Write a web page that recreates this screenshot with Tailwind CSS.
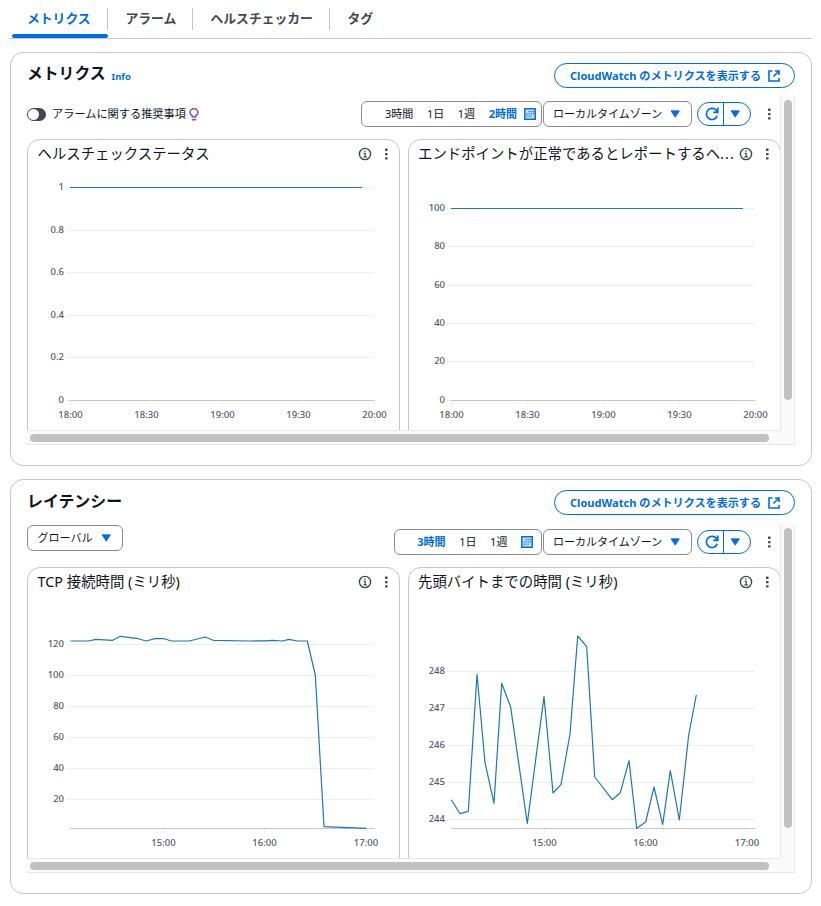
<!DOCTYPE html>
<html lang="ja">
<head>
    <meta charset="UTF-8">
    <meta name="viewport" content="width=device-width, initial-scale=1.0">
    <title>ヘルスチェック - メトリクス</title>
    <script src="https://cdn.jsdelivr.net/npm/@tailwindcss/browser@4"></script>
</head>
<body class="bg-white w-[821px] h-[906px] overflow-hidden font-['Noto_Sans','Noto_Sans_CJK_JP',sans-serif] text-[#0f141a] text-[11px] leading-none whitespace-nowrap">
    <!-- icons -->
    <svg class="hidden">
        <symbol id="external" viewBox="0 0 12 12"><path d="M4.5 1H1v10h10V8M7 1h4v4M11 1 5.5 6.5" fill="none" stroke="currentColor" stroke-width="1.6"/></symbol>
        <symbol id="info" viewBox="0 0 14 14"><circle cx="7" cy="7" r="5.6" fill="none" stroke="currentColor" stroke-width="1.4"/><path d="M5.6 6.4H7.2V9.9M5.4 9.9h3.4M6.2 4.2h1.4" fill="none" stroke="currentColor" stroke-width="1.2"/></symbol>
        <symbol id="dots" viewBox="0 0 4 12"><path d="M1.1 .6h2.4v2.4H1.1zM1.1 4.9h2.4v2.4H1.1zM1.1 9.2h2.4v2.4H1.1z" fill="currentColor"/></symbol>
        <symbol id="caret" viewBox="0 0 10 8"><path d="M1 .8h8.4L5.2 7.2z" fill="currentColor" stroke="currentColor" stroke-width=".8" stroke-linejoin="round"/></symbol>
        <symbol id="calendar" viewBox="0 0 12 12"><path d="M.8 .8h10.4v10.4H.8z" fill="#cfe3fb" stroke="currentColor" stroke-width="1.5"/><path d="M4.5 3h1.2v1.2H4.5zM6.6 3h1.2v1.2H6.6zM8.7 3h1.2v1.2H8.7zM2.4 5.2h1.2v1.2H2.4zM4.5 5.2h1.2v1.2H4.5zM6.6 5.2h1.2v1.2H6.6zM8.7 5.2h1.2v1.2H8.7zM2.4 7.6h1.2v1.2H2.4zM4.5 7.6h1.2v1.2H4.5zM6.6 7.6h1.2v1.2H6.6z" fill="currentColor"/></symbol>
        <symbol id="refresh" viewBox="0 0 14 14"><path d="M12.2 8.9A5.6 5.6 0 1 1 11.9 4.3L12.6 5.2M12.8 .6V5.4H8.2" fill="none" stroke="currentColor" stroke-width="1.7"/></symbol>
        <symbol id="bulb" viewBox="0 0 10 13"><path d="M3.4 9V7.8C1.8 6.9 1 5.9 1 4.6a4 4 0 0 1 8 0C9 5.9 8.2 6.9 6.6 7.8V9z" fill="none" stroke="currentColor" stroke-width="1.6"/><path d="M2.8 11.7h4.4" stroke="currentColor" stroke-width="1.6"/></symbol>
    </svg>

    <!-- tabs -->
    <nav class="ml-2.5 w-[802px] h-[39px] border-b border-[#c6c6cd] flex items-start text-[12.8px] font-bold text-[#424650]">
        <div class="ml-0.5 w-24 h-[38px] flex flex-col justify-end text-[#006ce0]">
            <div class="h-[22px] mb-1 pl-[15px] flex items-center border-r border-[#c6c6cd] leading-5 pb-[3px]">メトリクス</div>
            <div class="h-1 rounded-sm bg-[#006ce0]"></div>
        </div>
        <div class="mt-2 w-[85px] h-[22px] pl-[17.5px] pb-px flex items-center border-r border-[#c6c6cd]">アラーム</div>
        <div class="mt-2 w-[137px] h-[22px] pl-[17.5px] pb-px flex items-center border-r border-[#c6c6cd]">ヘルスチェッカー</div>
        <div class="mt-2 h-[22px] pl-[17.5px] pb-px flex items-center">タグ</div>
    </nav>

    <!-- metrics -->
    <section class="mt-[13px] ml-2.5 w-[802px] h-[414px] border border-[#c6c6cd] rounded-[13px] pl-4 pr-4 pt-2.5">
        <header class="h-[25px] flex justify-between">
            <div class="flex items-start gap-1.5 pt-[3px]">
                <h2 class="text-[15.8px] leading-none font-bold">メトリクス</h2>
                <a class="pt-[6px] text-[9.4px] leading-none font-bold text-[#006ce0]">Info</a>
            </div>
            <button class="w-[241px] h-[25px] pl-px border border-[#006ce0] rounded-full flex items-center justify-center gap-[7px] text-[#006ce0] text-[11.1px] font-bold"><span>CloudWatch のメトリクスを表示する</span><svg class="size-3"><use href="#external"/></svg></button>
        </header>
        <div class="mt-[9px] w-[768px] h-[348px] grid grid-cols-[753px_15px] grid-rows-[333px_15px]">
            <div class="overflow-hidden">
                <div class="mt-1 h-[26px] flex items-center justify-between">
                    <div class="flex items-center">
                        <div class="w-[19px] h-[13px] rounded-full bg-[#424650] p-px"><div class="size-[11px] rounded-full bg-white"></div></div>
                        <span class="ml-1.5 text-[11.2px]">アラームに関する推奨事項</span>
                        <svg class="ml-[3px] w-2.5 h-[13px] text-[#8f4fd9]"><use href="#bulb"/></svg>
                    </div>
                    <div class="flex items-center">
                        <div class="w-[181px] h-[26px] border border-[#8c8c94] rounded-md flex items-center justify-end gap-[13.6px] pr-[5px]">
                            <span class="pb-px">3時間</span><span class="pb-px">1日</span><span class="pb-px">1週</span>
                            <span class="flex items-center gap-[7px] text-[#006ce0] font-bold"><span class="pb-px">2時間</span><svg class="size-3"><use href="#calendar"/></svg></span>
                        </div>
                        <div class="ml-px w-[149px] h-[26px] border border-[#8c8c94] rounded-md flex items-center justify-between pl-[9px] pr-[11px]"><span class="pb-px">ローカルタイムゾーン</span><svg class="w-2.5 h-2 mb-px text-[#006ce0]"><use href="#caret"/></svg></div>
                        <div class="ml-[5px] w-[54px] h-6 border border-[#006ce0] rounded-full flex text-[#006ce0]">
                            <span class="w-[26px] pl-[3px] border-r border-[#006ce0] flex items-center justify-center"><svg class="size-3.5 mb-px"><use href="#refresh"/></svg></span>
                            <span class="flex-1 pr-1 flex items-center justify-center"><svg class="w-2.5 h-2 mb-px"><use href="#caret"/></svg></span>
                        </div>
                        <svg class="ml-4 mr-[9px] w-1 h-3 text-[#424650]"><use href="#dots"/></svg>
                    </div>
                </div>
                <div class="mt-3 flex gap-2 w-[760px]">
                    <article class="w-[373px] h-[310px] shrink-0 border border-[#c6c6cd] rounded-[13px]">
                        <div class="h-[30px] pl-[9.5px] pr-[11px] pb-0.5 flex items-center">
                            <h3 class="flex-1 text-[14.4px]">ヘルスチェックステータス</h3>
                            <svg class="size-3.5 text-[#424650]"><use href="#info"/></svg>
                            <svg class="ml-3 w-1 h-3 text-[#424650]"><use href="#dots"/></svg>
                        </div>
                        <svg id="chart-status" class="w-[371px] h-[260px]"></svg>
                    </article>
                    <article class="w-[373px] h-[310px] shrink-0 border border-[#c6c6cd] rounded-[13px]">
                        <div class="h-[30px] pl-[9px] pr-[11px] pb-0.5 flex items-center">
                            <h3 class="flex-1 text-[14.4px]">エンドポイントが正常であるとレポートするヘ<span class="tracking-[1.1px]">...</span></h3>
                            <svg class="size-3.5 text-[#424650]"><use href="#info"/></svg>
                            <svg class="ml-3 w-1 h-3 text-[#424650]"><use href="#dots"/></svg>
                        </div>
                        <svg id="chart-healthy" class="w-[371px] h-[260px]"></svg>
                    </article>
                </div>
            </div>
            <div class="bg-[#fafafa] border-x border-[#e8e8e8] pt-[3px] pl-[3px]"><div class="w-2 h-[300px] rounded-full bg-[#c1c1c1]"></div></div>
            <div class="bg-[#fafafa] border-y border-[#e8e8e8] flex items-center pl-[3px]"><div class="w-[739px] h-2 rounded-full bg-[#c1c1c1]"></div></div>
            <div class="bg-[#fafafa] border-b border-r border-[#e8e8e8]"></div>
        </div>
    </section>

    <!-- latency -->
    <section class="mt-[13px] ml-2.5 w-[802px] h-[415px] border border-[#c6c6cd] rounded-[13px] pl-4 pr-4 pt-2.5">
        <header class="h-[25px] flex justify-between">
            <h2 class="pt-1 text-[15.9px] leading-none font-bold">レイテンシー</h2>
            <button class="w-[241px] h-[25px] pl-px border border-[#006ce0] rounded-full flex items-center justify-center gap-[7px] text-[#006ce0] text-[11.1px] font-bold"><span>CloudWatch のメトリクスを表示する</span><svg class="size-3"><use href="#external"/></svg></button>
        </header>
        <div class="mt-2.5 w-[768px] h-[348px] grid grid-cols-[753px_15px] grid-rows-[333px_15px]">
            <div class="overflow-hidden">
                <div class="h-[30px] flex items-start justify-between">
                    <div class="w-24 h-[26px] border border-[#8c8c94] rounded-md flex items-center justify-between pl-[9.5px] pr-[11px]"><span class="pb-px">グローバル</span><svg class="w-2.5 h-2 mb-px text-[#006ce0]"><use href="#caret"/></svg></div>
                    <div class="mt-1 flex items-center">
                        <div class="w-[148px] h-[26px] border border-[#8c8c94] rounded-md flex items-center justify-end gap-[13.6px] pr-2">
                            <span class="pb-px text-[#006ce0] font-bold">3時間</span><span class="pb-px">1日</span><span class="pb-px">1週</span>
                            <svg class="size-3 text-[#006ce0]"><use href="#calendar"/></svg>
                        </div>
                        <div class="ml-px w-[149px] h-[26px] border border-[#8c8c94] rounded-md flex items-center justify-between pl-[9px] pr-[11px]"><span class="pb-px">ローカルタイムゾーン</span><svg class="w-2.5 h-2 mb-px text-[#006ce0]"><use href="#caret"/></svg></div>
                        <div class="ml-[5px] w-[54px] h-6 border border-[#006ce0] rounded-full flex text-[#006ce0]">
                            <span class="w-[26px] pl-[3px] border-r border-[#006ce0] flex items-center justify-center"><svg class="size-3.5 mb-px"><use href="#refresh"/></svg></span>
                            <span class="flex-1 pr-1 flex items-center justify-center"><svg class="w-2.5 h-2 mb-px"><use href="#caret"/></svg></span>
                        </div>
                        <svg class="ml-4 mr-[9px] w-1 h-3 text-[#424650]"><use href="#dots"/></svg>
                    </div>
                </div>
                <div class="mt-3 flex gap-2 w-[760px]">
                    <article class="w-[373px] h-[310px] shrink-0 border border-[#c6c6cd] rounded-[13px]">
                        <div class="h-[30px] pl-[9.5px] pr-[11px] pb-0.5 flex items-center">
                            <h3 class="flex-1 text-[14.4px]">TCP 接続時間 (ミリ秒)</h3>
                            <svg class="size-3.5 text-[#424650]"><use href="#info"/></svg>
                            <svg class="ml-3 w-1 h-3 text-[#424650]"><use href="#dots"/></svg>
                        </div>
                        <svg id="chart-tcp" class="w-[371px] h-[260px]"></svg>
                    </article>
                    <article class="w-[373px] h-[310px] shrink-0 border border-[#c6c6cd] rounded-[13px]">
                        <div class="h-[30px] pl-[9px] pr-[11px] pb-0.5 flex items-center">
                            <h3 class="flex-1 text-[14.4px]">先頭バイトまでの時間 (ミリ秒)</h3>
                            <svg class="size-3.5 text-[#424650]"><use href="#info"/></svg>
                            <svg class="ml-3 w-1 h-3 text-[#424650]"><use href="#dots"/></svg>
                        </div>
                        <svg id="chart-ttfb" class="w-[371px] h-[260px]"></svg>
                    </article>
                </div>
            </div>
            <div class="bg-[#fafafa] border-x border-[#e8e8e8] pt-[3px] pl-[3px]"><div class="w-2 h-[300px] rounded-full bg-[#c1c1c1]"></div></div>
            <div class="bg-[#fafafa] border-y border-[#e8e8e8] flex items-center pl-[3px]"><div class="w-[739px] h-2 rounded-full bg-[#c1c1c1]"></div></div>
            <div class="bg-[#fafafa] border-b border-r border-[#e8e8e8]"></div>
        </div>
    </section>

    <script>
        // yTicks and xTicks are [label, position] pairs
        function drawChart(id, yTicks, xTicks, points) {
            let out = '';
            yTicks.forEach(([label, y]) => {
                out += `<path d="M38 ${y}H346" stroke="#eeeeee"/>
                    <text x="36" y="${y + 2.5}" text-anchor="end">${label}</text>`;
            });
            xTicks.forEach(([label, x]) => {
                out += `<path d="M${x} 231v4" stroke="#eeeeee"/>
                    <text x="${x}" y="248" text-anchor="middle">${label}</text>`;
            });
            out += '<path d="M42 230.5H346.5" stroke="#c6c6c6"/>';
            out += `<polyline points="${points}" fill="none" stroke="#1f77b4" stroke-width="1.2" stroke-linejoin="round"/>`;
            document.getElementById(id).innerHTML = `<g font-size="9.5" fill="#545b64" font-weight="500">${out}</g>`;
        }

        const evening = [['18:00', 42.5], ['18:30', 118.5], ['19:00', 194.5], ['19:30', 270.5], ['20:00', 346.5]];
        const afternoon = [['15:00', 135.5], ['16:00', 236.5], ['17:00', 338]];

        drawChart('chart-status',
            [['1', 17.5], ['0.8', 60.5], ['0.6', 102.5], ['0.4', 145.5], ['0.2', 187.5], ['0', 230.5]],
            evening, '42,17.5 334,17.5');

        drawChart('chart-healthy',
            [['100', 38.5], ['80', 76.5], ['60', 115.5], ['40', 153.5], ['20', 191.5], ['0', 230.5]],
            evening, '42,38.5 334,38.5');

        drawChart('chart-tcp',
            [['120', 46.5], ['100', 77.5], ['80', 108.5], ['60', 139.5], ['40', 170.5], ['20', 201.5]],
            afternoon,
            '42.5,43 60.3,43 68,41.3 84.7,42.3 92.3,38.3 110.3,40.7 118,43 127,40.7 136,40.7 143.7,43 161.3,43 177.3,39 185.3,42.3 222,43 236.3,42.8 244.3,42.3 254.3,43 261,41.3 269.3,43 279.3,43 287.3,77 296,228.7 338,230.3');

        drawChart('chart-ttfb',
            [['248', 73.5], ['247', 110.5], ['246', 147.5], ['245', 184.5], ['244', 221.5]],
            afternoon,
            '42.3,201.7 51,215.7 59.3,213.3 68,76.3 76,164.7 85,205.3 92.7,85.3 101.7,109.3 118.3,225.3 135,98.7 144,195 152,186.7 161,136 168.7,38 177.7,48.7 185.7,179 203.3,201.7 211.3,194.7 220,162.7 227.7,230.3 236.7,224 245,189 253.7,226.7 261.3,172.7 270.3,222 279.7,137 287.3,97');
    </script>
</body>
</html>
